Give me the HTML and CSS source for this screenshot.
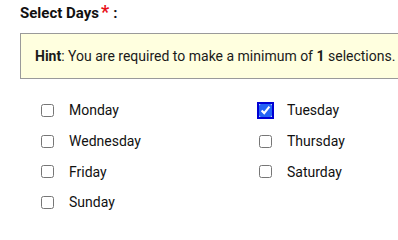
FILE: index.html
```html
<!DOCTYPE html>
<html>
<head>
<meta charset="utf-8">
<link rel="stylesheet" href="styles.css">
</head>
<body>
<div class="field">
  <div class="title">Select Days<span class="req">*</span>:</div>
  <div class="hint"><b>Hint</b>: You are required to make a minimum of <b>1</b> selections.</div>
  <div class="options">
    <label class="opt"><input type="checkbox"><span>Monday</span></label>
    <label class="opt"><input type="checkbox" class="focus" checked><span>Tuesday</span></label>
    <label class="opt"><input type="checkbox"><span>Wednesday</span></label>
    <label class="opt"><input type="checkbox"><span>Thursday</span></label>
    <label class="opt"><input type="checkbox"><span>Friday</span></label>
    <label class="opt"><input type="checkbox"><span>Saturday</span></label>
    <label class="opt"><input type="checkbox"><span>Sunday</span></label>
  </div>
</div>
</body>
</html>
```
FILE: styles.css
```css
html, body {
  margin: 0;
  padding: 0;
  background: #fff;
  overflow: hidden;
}
body {
  font-family: Roboto, "Liberation Sans", sans-serif;
  color: #1a1a1a;
  width: 398px;
}
.field {
  padding: 2px 0 0 20px;
}
.title {
  font-weight: 700;
  font-size: 15px;
  line-height: 20px;
  height: 20px;
  color: #111;
}
.req {
  color: #e8101a;
  font-size: 18px;
  margin-left: 2px;
  margin-right: 4px;
}
.hint {
  margin-top: 11px;
  width: 420px;
  height: 44px;
  box-sizing: content-box;
  border: 1px solid #9a9a9a;
  background: #ffffdf;
  font-size: 14px;
  line-height: 44px;
  padding-left: 14px;
  white-space: nowrap;
  color: #1a1a1a;
}
.hint b {
  font-weight: 700;
}
.options {
  display: grid;
  grid-template-columns: 218px 1fr;
  grid-auto-rows: 30.7px;
  padding-left: 21px;
  margin-top: 16px;
}
.opt {
  display: flex;
  align-items: center;
  font-size: 14px;
  color: #111;
}
.opt input {
  margin: 0 15px 0 0;
  width: 13px;
  height: 13px;
}
.opt input.focus {
  accent-color: #2464f5;
  outline: 2px solid #0000d4;
  outline-offset: 0;
}
```
